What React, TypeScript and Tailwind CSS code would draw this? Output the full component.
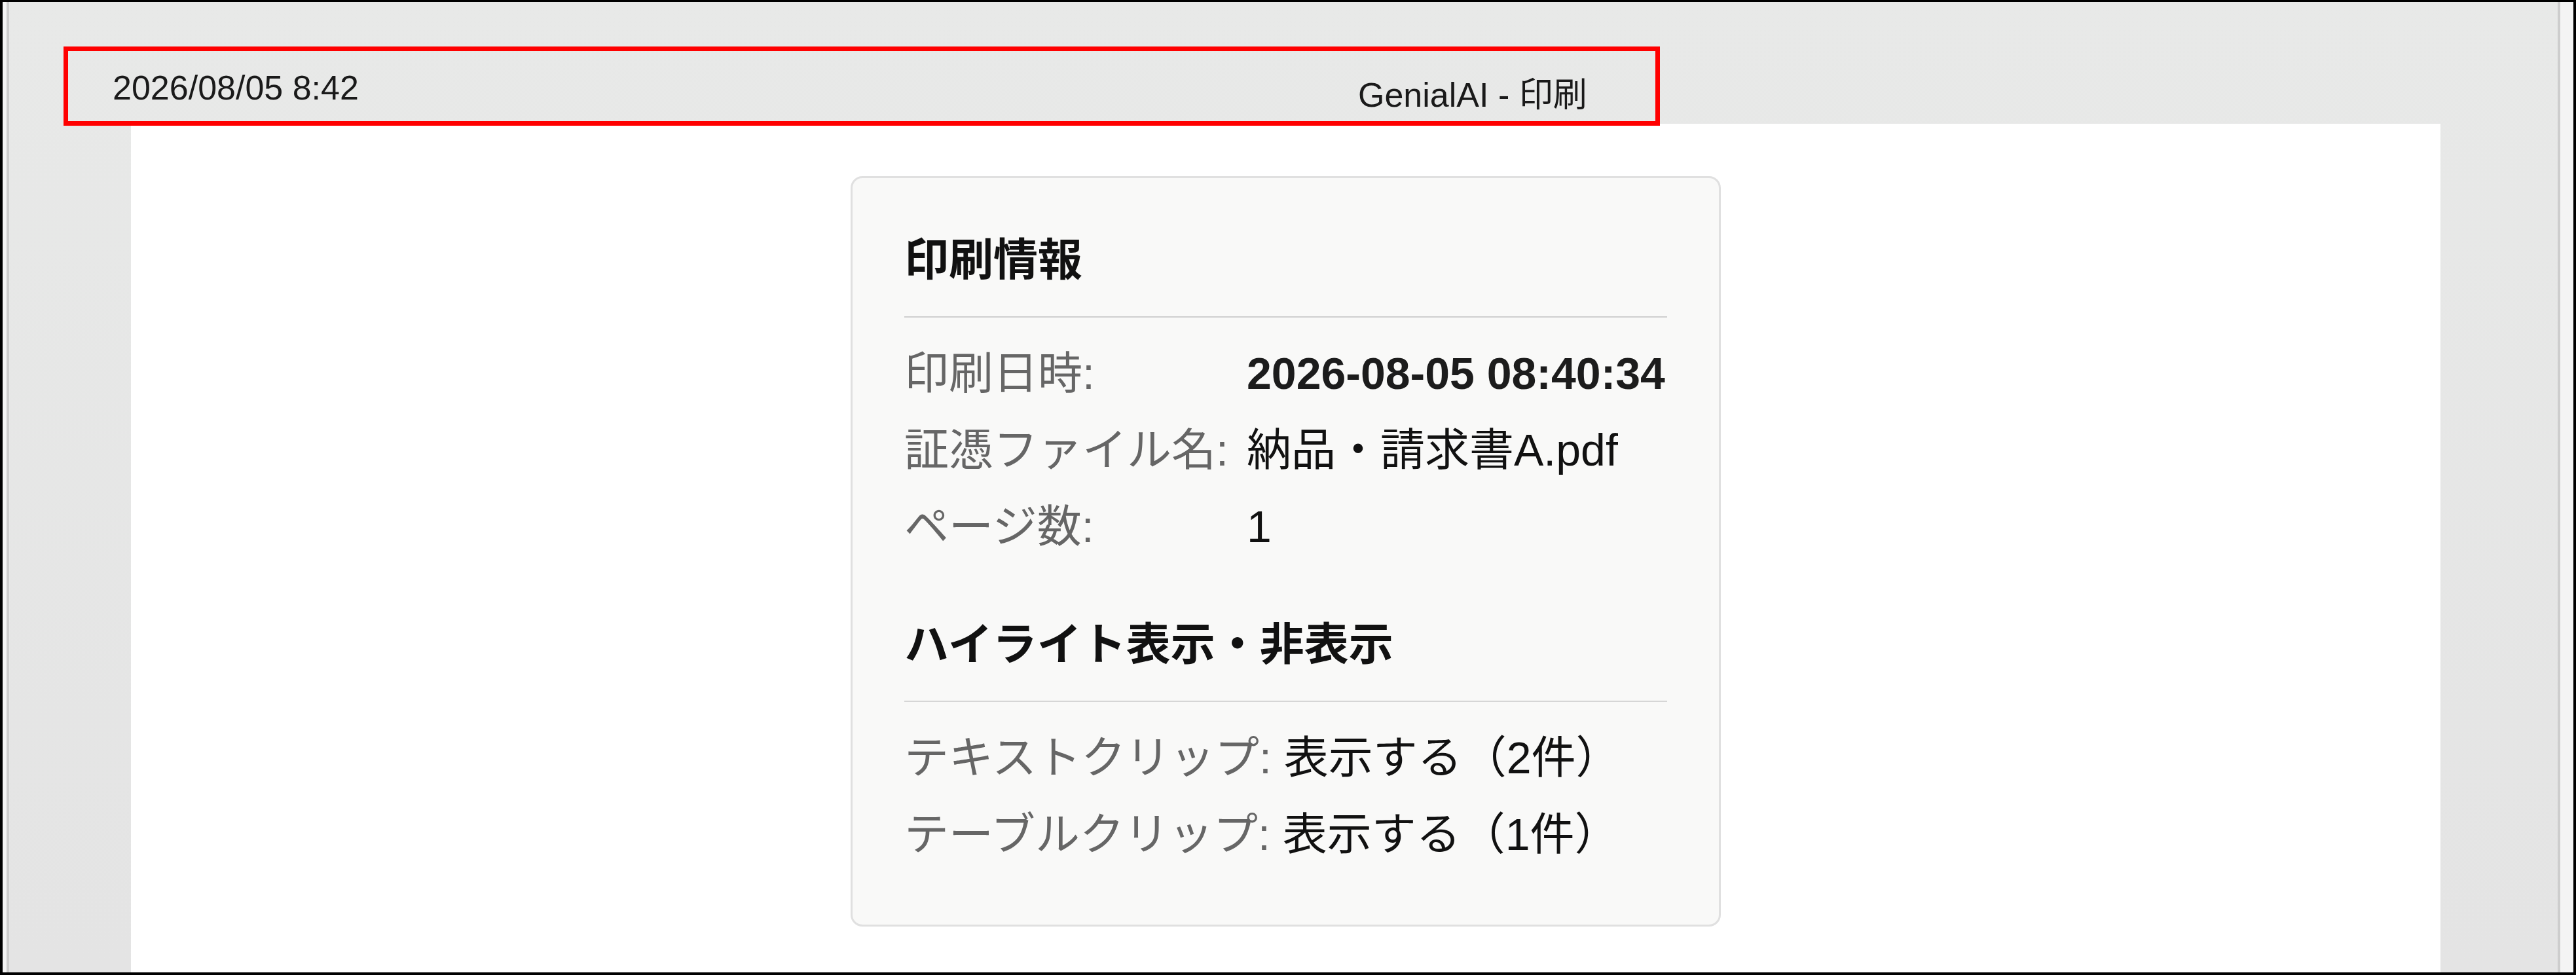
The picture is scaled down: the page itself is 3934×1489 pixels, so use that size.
import React from "react";

// 印刷プレビュー：ヘッダー（日時・タイトル）と印刷情報カード

type Row = { label: string; value: string; strong?: boolean };

const printRows: Row[] = [
  { label: "印刷日時:", value: "2026-08-05 08:40:34", strong: true },
  { label: "証憑ファイル名:", value: "納品・請求書A.pdf" },
  { label: "ページ数:", value: "1" },
];

const clipRows: Row[] = [
  { label: "テキストクリップ:", value: "表示する（2件）" },
  { label: "テーブルクリップ:", value: "表示する（1件）" },
];

export default function App() {
  return (
    <div className="relative flex h-[1489px] w-[3934px] border-4 border-t-[3px] border-black bg-[#f4f4f4] font-['Liberation_Sans','Noto_Sans_CJK_JP',sans-serif]">
      <div className="w-[6px] shrink-0" />

      <div className="flex flex-1 flex-col border-x-4 border-[#cdcdcd] bg-gradient-to-b from-[#e8e9e8] to-[#e4e4e4]">
        {/* ページ上部のヘッダー */}
        <header className="flex h-[186px] shrink-0 pl-[158px] text-[52px] leading-none text-[#1a1a1a]">
          <div className="w-[1902px] pt-[105px]">2026/08/05 8:42</div>
          <div className="pt-[116px]">GenialAI - 印刷</div>
        </header>

        <main className="ml-[186px] mr-[179px] flex-1 bg-white">
          <section className="mx-auto mt-[80px] w-[1329px] rounded-[18px] border-[3px] border-[#e0e0e0] bg-[#f9f9f8] px-[79px] pt-[67px] pb-[79px] text-[68px]">
            <h2 className="border-b-2 border-[#cfcfcf] pb-[27px] font-bold leading-[117px] text-[#111]">
              印刷情報
            </h2>
            <div className="mt-[27px] grid grid-cols-[523px_1fr] leading-[117px]">
              {printRows.map((row) => (
                <React.Fragment key={row.label}>
                  <div className="text-[#666]">{row.label}</div>
                  <div
                    className={
                      row.strong
                        ? "whitespace-nowrap font-semibold text-[#1c1c1c]"
                        : "whitespace-nowrap text-[#111]"
                    }
                  >
                    {row.value}
                  </div>
                </React.Fragment>
              ))}
            </div>

            <h2 className="mt-[63px] border-b-2 border-[#d6d6d6] pb-[27px] font-bold leading-[117px] text-[#111]">
              ハイライト表示・非表示
            </h2>
            <div className="mt-[27px] leading-[117px]">
              {clipRows.map((row) => (
                <div key={row.label}>
                  <span className="text-[#666]">{row.label}</span>{" "}
                  <span className="text-[#111]">{row.value}</span>
                </div>
              ))}
            </div>
          </section>
        </main>
      </div>

      <div className="w-[20px] shrink-0" />

      {/* ヘッダー部分を囲む赤枠 */}
      <div className="pointer-events-none absolute left-[93px] top-[68px] h-[121px] w-[2438px] border-[7px] border-[#ff0000]" />
    </div>
  );
}
